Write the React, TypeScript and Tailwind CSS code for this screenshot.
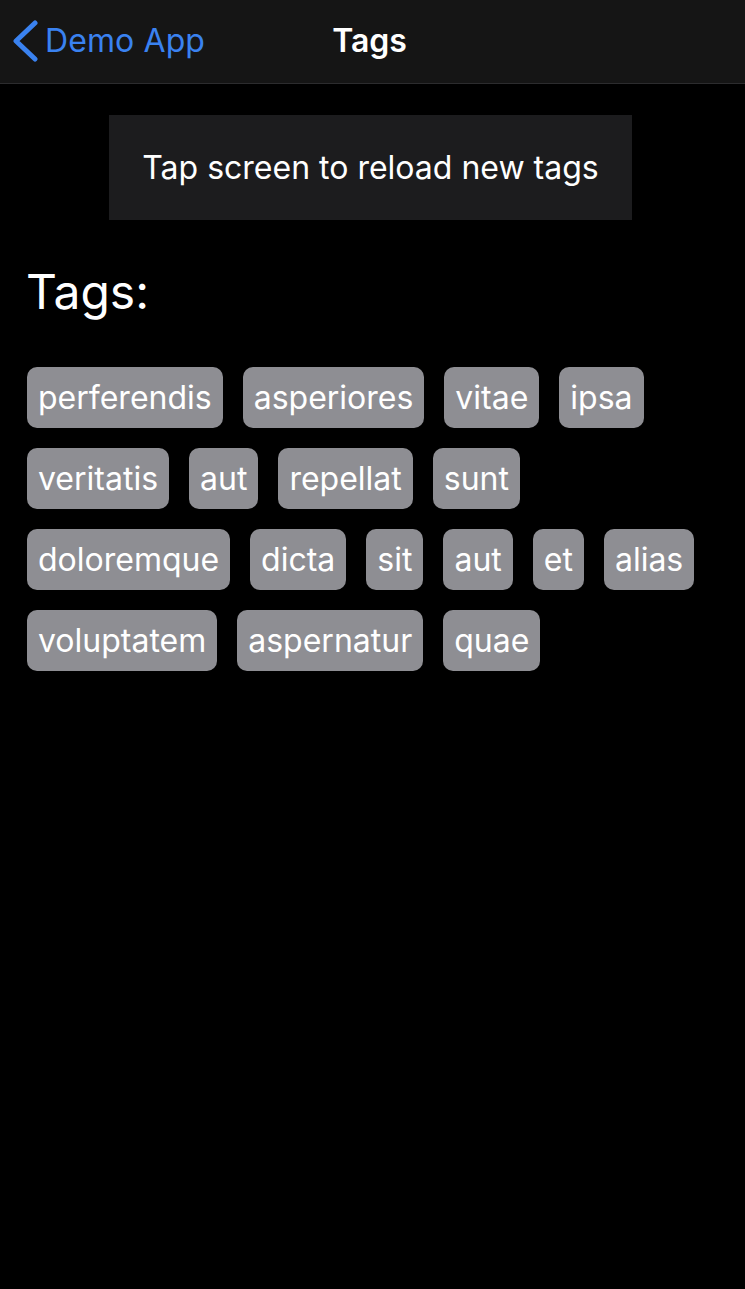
import React from 'react';

const rows: string[][] = [
  ['perferendis', 'asperiores', 'vitae', 'ipsa'],
  ['veritatis', 'aut', 'repellat', 'sunt'],
  ['doloremque', 'dicta', 'sit', 'aut', 'et', 'alias'],
  ['voluptatem', 'aspernatur', 'quae'],
];

const BackChevron = () => (
  <svg width="28" height="42" viewBox="0 0 28 42" fill="none">
    <path d="M24 3 L5 21 L24 39" stroke="#3a82f0" strokeWidth="5" strokeLinecap="round" strokeLinejoin="round" />
  </svg>
);

export default function App() {
  return (
    <div className="min-h-[1289px] bg-black text-white font-['Inter',sans-serif]">
      {/* Nav bar */}
      <header className="relative h-[84px] bg-[#151515] border-b border-[#2c2c2e] flex items-center">
        <button className="flex items-center pl-[11px] gap-[6px] text-[#3a82f0] -mt-[2px]">
          <BackChevron />
          <span className="text-[32px] leading-none tracking-[0.1px]">Demo App</span>
        </button>
        <h1 className="absolute left-[calc(50%-3px)] -translate-x-1/2 text-[32px] font-semibold leading-none -mt-[2px]">Tags</h1>
      </header>

      {/* Reload button */}
      <div className="pt-[31px] flex justify-center">
        <div className="w-[523px] h-[105px] bg-[#1c1c1e] flex items-center justify-center ml-[-4px]">
          <span className="text-[32px] leading-none">Tap screen to reload new tags</span>
        </div>
      </div>

      {/* Tags */}
      <div className="px-[27px] pt-[48px]">
        <h2 className="text-[48px] leading-none -ml-[1px]">Tags:</h2>
        <div className="mt-[51px] flex flex-col gap-[20px]">
          {rows.map((row, i) => (
            <div key={i} className="flex gap-[20px]">
              {row.map((t, j) => (
                <span key={j} className="h-[61px] px-[11px] flex items-center bg-[#8e8e93] rounded-[10px] text-[32px] leading-none">
                  {t}
                </span>
              ))}
            </div>
          ))}
        </div>
      </div>
    </div>
  );
}
